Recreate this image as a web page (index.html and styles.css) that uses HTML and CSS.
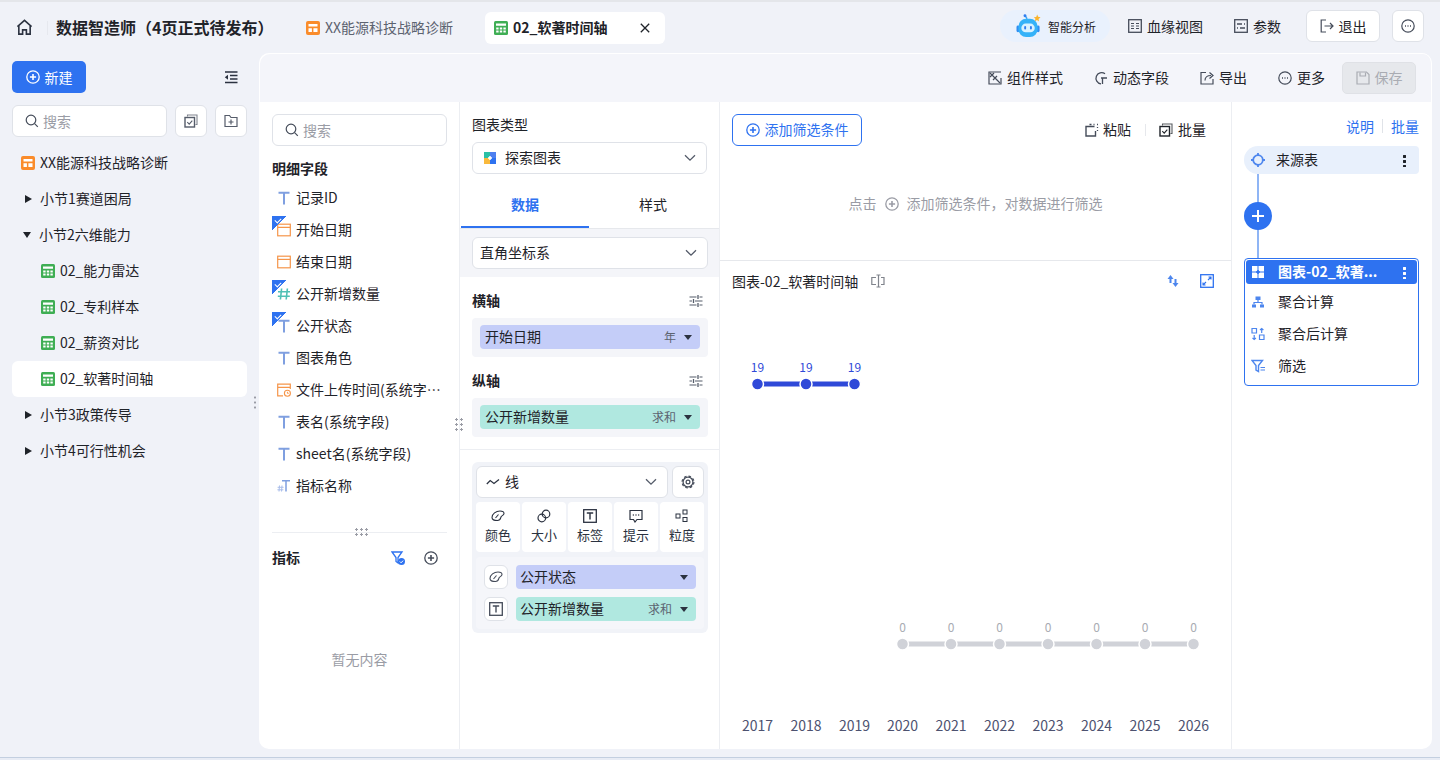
FILE: index.html
```html
<!DOCTYPE html>
<html lang="zh-CN">

<head>
    <meta charset="UTF-8">
    <meta name="viewport" content="width=device-width, initial-scale=1.0">
    <title>数据智造师</title>
    <link rel="stylesheet" href="styles.css">
</head>

<body>
    <svg class="sprite" xmlns="http://www.w3.org/2000/svg">
        <symbol id="i-dash" viewBox="0 0 14 14"><rect width="14" height="14" rx="2" fill="#fa8c2b"/><path d="M2.5 3h9v2.6h-9zM2.5 7.2h3.4v3.8H2.5zM7.4 7.2h4.1v3.8H7.4z" fill="#fff"/></symbol>
        <symbol id="i-table" viewBox="0 0 14 14"><rect width="14" height="14" rx="1.5" fill="#3fae54"/><path d="M2 2.5h10v2.3H2zM2.2 6.4h2.4v2H2.2zM5.8 6.4h2.4v2H5.8zM9.4 6.4h2.4v2H9.4zM2.2 9.6h2.4v2H2.2zM5.8 9.6h2.4v2H5.8zM9.4 9.6h2.4v2H9.4z" fill="#fff"/></symbol>
        <symbol id="i-plus" viewBox="0 0 14 14"><circle cx="7" cy="7" r="6.2" fill="none" stroke="currentColor" stroke-width="1.3"/><path d="M3.9 7h6.2M7 3.9v6.2" stroke="currentColor" stroke-width="1.6"/></symbol>
        <symbol id="i-search" viewBox="0 0 14 14"><circle cx="6" cy="6" r="4.8" fill="none" stroke="currentColor" stroke-width="1.2"/><path d="M9.6 9.6l3.2 3.2" stroke="currentColor" stroke-width="1.2"/></symbol>
        <symbol id="i-batch" viewBox="0 0 14 14"><path d="M3.5 2.5V1h9.500v9.500h-1.500" fill="none" stroke="currentColor" stroke-width="1.1" opacity=".75"/><rect x="1" y="3.5" width="9.5" height="9.5" fill="none" stroke="currentColor" stroke-width="1.4"/><path d="M3.3 8.2l1.9 1.9 3.1-3.5" fill="none" stroke="currentColor" stroke-width="1.1"/></symbol>
        <symbol id="i-t" viewBox="0 0 14 14"><path d="M1.500 1.800h11M7 1.800V13.500" fill="none" stroke="#7f9fe0" stroke-width="2"/></symbol>
        <symbol id="i-date" viewBox="0 0 14 14"><rect x=".7" y="1.2" width="12.6" height="11.6" fill="none" stroke="#f5954a" stroke-width="1.2"/><path d="M.7 4.4h12.6" stroke="#f5954a" stroke-width="1.2"/></symbol>
        <symbol id="i-hash" viewBox="0 0 14 14"><path d="M4.600 1.500L3.400 12.500M10.400 1.500L9.200 12.500M1 4.800h12M.8 9.200h12" fill="none" stroke="#4fc0b5" stroke-width="1.6"/></symbol>
        <symbol id="i-datetime" viewBox="0 0 14 14"><path d="M6 12.800H.7V1.200h12.600V6M.7 4.400h12.600" fill="none" stroke="#f5954a" stroke-width="1.2"/><circle cx="10.400" cy="10.200" r="3" fill="#fff" stroke="#f5954a" stroke-width="1.1"/><path d="M10.400 8.800v1.500h1.300" fill="none" stroke="#f5954a"/></symbol>
        <symbol id="i-metric" viewBox="0 0 14 14"><path d="M5 1.800h8M9 1.800v10.700" fill="none" stroke="#7f9fe0" stroke-width="1.5"/><path d="M2.500 6.500L2 12.500M5 6.500l-.5 6M.6 8.300h6M.4 10.800h6" fill="none" stroke="#a9bdea" stroke-width="1"/></symbol>
        <symbol id="i-chev" viewBox="0 0 12 8"><path d="M1 1.200l5 5 5-5" fill="none" stroke="currentColor" stroke-width="1.3"/></symbol>
        <symbol id="i-sliders" viewBox="0 0 14 14"><path d="M.5 3h7M10.500 3h3M.5 7h2.500M6 7h7.500M.5 11h7M10.500 11h3" fill="none" stroke="currentColor" stroke-width="1.1"/><path d="M9 1v4M4.500 5v4M9 9v4" stroke="currentColor" stroke-width="1.3"/></symbol>
        <symbol id="i-palette" viewBox="0 0 14 14"><path d="M1 8.500C1 5 5 2 9 2c2.500 0 4 1 4 2.500 0 2-2.500 2-3 3.500-.5 1.500-.5 3.500-3.500 3.500C3 11.500 1 11 1 8.500z" fill="none" stroke="currentColor" stroke-width="1.1"/><path d="M4.500 9l3-3.500" stroke="currentColor" stroke-width="1.1"/></symbol>
        <symbol id="i-label" viewBox="0 0 14 14"><rect x=".7" y=".7" width="12.6" height="12.6" fill="none" stroke="currentColor" stroke-width="1.3"/><path d="M3.800 4h6.400M7 4v6.500" fill="none" stroke="currentColor" stroke-width="1.4"/></symbol>
    </svg>

    <div class="app">
        <header class="topbar">
            <svg class="home-icon" viewBox="0 0 18 18"><path d="M1.500 8L9 1.500 16.500 8M3 6.800V16h4v-4.500h4V16h4V6.800" fill="none" stroke="#2b3240" stroke-width="1.7"/></svg>
            <span class="top-sep"></span>
            <h1 class="app-title">数据智造师（4页正式待发布）</h1>
            <div class="tab"><svg class="ic"><use href="#i-dash"/></svg>XX能源科技战略诊断</div>
            <div class="tab tab-active">
                <svg class="ic"><use href="#i-table"/></svg>
                <span class="tab-name">02_软著时间轴</span>
                <svg class="tab-close" viewBox="0 0 10 10"><path d="M.8.800l8.400 8.400M9.200.800L.8 9.200" stroke="#1f2329" stroke-width="1.3"/></svg>
            </div>
            <div class="top-actions">
                <div class="ai-pill">
                    <svg class="robot" viewBox="0 0 28 26">
                        <path d="M12 5L10 1.500" stroke="#39a4f5" stroke-width="1.5"/>
                        <circle cx="9.800" cy="1.800" r="1.5" fill="#2f7df0"/>
                        <path d="M22.500 .5l1 2.400 2.500.6-2 1.600.3 2.600-2-1.400-2.200 1.200.6-2.500-1.700-1.700 2.500-.3z" fill="#fbb42c"/>
                        <rect x="1" y="12" width="3" height="7" rx="1.5" fill="#2f8df2"/>
                        <rect x="22" y="12" width="3" height="7" rx="1.5" fill="#2f8df2"/>
                        <rect x="3" y="5" width="20" height="19" rx="8" fill="#35b2f8"/>
                        <rect x="6" y="10" width="14" height="9" rx="4.5" fill="#d9f2ff"/>
                        <rect x="9" y="12.500" width="2" height="3.5" rx="1" fill="#2f7df0"/>
                        <rect x="15" y="12.500" width="2" height="3.5" rx="1" fill="#2f7df0"/>
                    </svg>
                    <span class="ai-text">智能分析</span>
                </div>
                <div class="top-link link-lineage">
                    <svg class="ic" viewBox="0 0 14 14"><rect x=".7" y=".7" width="12.6" height="12.6" fill="none" stroke="#454c5a" stroke-width="1.3"/><path d="M3 4.500h3M3 9.500h3M8 4.500h3M8 7h3M8 9.500h3M3 7h3" stroke="#454c5a" stroke-width="1.2" fill="none"/></svg>
                    血缘视图
                </div>
                <div class="top-link link-param">
                    <svg class="ic" viewBox="0 0 14 14"><rect x=".7" y=".7" width="12.6" height="12.6" fill="none" stroke="#454c5a" stroke-width="1.3"/><path d="M3 5h5M10 5h1M3 9h1M6 9h5" stroke="#454c5a" stroke-width="1.3"/></svg>
                    参数
                </div>
                <button class="top-btn btn-exit">
                    <svg class="ic" viewBox="0 0 14 14"><path d="M6 1H1.200v12H6M4.500 7H13M10 4l3 3-3 3" fill="none" stroke="#454c5a" stroke-width="1.2"/></svg>
                    退出
                </button>
                <button class="top-btn btn-more">
                    <svg class="ic" viewBox="0 0 14 14"><circle cx="7" cy="7" r="6.2" fill="none" stroke="#454c5a" stroke-width="1.2"/><path d="M4 7h1M6.500 7h1M9 7h1" stroke="#454c5a" stroke-width="1.3"/></svg>
                </button>
            </div>
        </header>

        <div class="workspace">
            <aside class="sidebar">
                <div class="side-head">
                    <button class="btn-new"><svg class="ic"><use href="#i-plus"/></svg>新建</button>
                    <svg class="ic collapse" viewBox="0 0 14 14"><path d="M1 2h12.500M6 5.500h7.500M6 9h7.500M1 12.500h12.500" stroke="#2b3240" stroke-width="1.3"/><path d="M4 4.700L.8 7.200 4 9.700z" fill="#2b3240"/></svg>
                </div>
                <div class="side-search">
                    <div class="search-box"><svg class="ic"><use href="#i-search"/></svg>搜索</div>
                    <button class="square-btn"><svg class="ic"><use href="#i-batch"/></svg></button>
                    <button class="square-btn">
                        <svg class="ic" viewBox="0 0 14 14"><path d="M1 12.500V1.500h4.500L7 3.500h6v9z" fill="none" stroke="#555c6a" stroke-width="1.2"/><path d="M4.500 8h5M7 5.500v5" stroke="#555c6a" stroke-width="1.2"/></svg>
                    </button>
                </div>
                <ul class="tree">
                    <li class="tree-row tree-root"><svg class="ic"><use href="#i-dash"/></svg>XX能源科技战略诊断</li>
                    <li class="tree-row tree-section"><i class="caret"></i>小节1赛道困局</li>
                    <li class="tree-row tree-section"><i class="caret caret-open"></i>小节2六维能力</li>
                    <li class="tree-row tree-child"><svg class="ic"><use href="#i-table"/></svg>02_能力雷达</li>
                    <li class="tree-row tree-child"><svg class="ic"><use href="#i-table"/></svg>02_专利样本</li>
                    <li class="tree-row tree-child"><svg class="ic"><use href="#i-table"/></svg>02_薪资对比</li>
                    <li class="tree-row tree-child tree-selected"><svg class="ic"><use href="#i-table"/></svg>02_软著时间轴</li>
                    <li class="tree-row tree-section"><i class="caret"></i>小节3政策传导</li>
                    <li class="tree-row tree-section"><i class="caret"></i>小节4可行性机会</li>
                </ul>
                <span class="grip grip-side"></span>
            </aside>

            <main class="panel">
                <div class="panel-toolbar">
                    <div class="tool tool-style">
                        <svg class="ic" viewBox="0 0 14 14"><path d="M13 1H1v12h12V7" fill="none" stroke="#454c5a" stroke-width="1.2"/><path d="M2 2l10 10M6 2L2 6M9 5l-4 4" stroke="#454c5a" stroke-width="1.2"/></svg>
                        组件样式
                    </div>
                    <div class="tool tool-dynamic">
                        <svg class="ic" viewBox="0 0 14 14"><path d="M11 2.800A5.600 5.600 0 1 0 7 12.800" fill="none" stroke="#454c5a" stroke-width="1.3"/><path d="M7 7h6M8.500 7v6" stroke="#454c5a" stroke-width="1.3"/></svg>
                        动态字段
                    </div>
                    <div class="tool tool-export">
                        <svg class="ic" viewBox="0 0 14 14"><path d="M6 1.500H1v11.500h12V8" fill="none" stroke="#454c5a" stroke-width="1.2"/><path d="M5 9.500C5 6 7.500 4.500 11 4.500M9.500 1.500l3.500 3-3.500 3" fill="none" stroke="#454c5a" stroke-width="1.2"/></svg>
                        导出
                    </div>
                    <div class="tool tool-more">
                        <svg class="ic" viewBox="0 0 14 14"><circle cx="7" cy="7" r="6.2" fill="none" stroke="#454c5a" stroke-width="1.2"/><path d="M4 7h1M6.500 7h1M9 7h1" stroke="#454c5a" stroke-width="1.3"/></svg>
                        更多
                    </div>
                    <button class="btn-save">
                        <svg class="ic" viewBox="0 0 14 14"><path d="M1 1h9.500L13 3.500V13H1z" fill="none" stroke="#a9acb3" stroke-width="1.2"/><path d="M4 1.500v3.500h5.500V1.500" fill="none" stroke="#a9acb3" stroke-width="1.2"/></svg>
                        保存
                    </button>
                </div>

                <div class="columns">
                    <section class="col-fields">
                        <div class="search-box search-fields"><svg class="ic"><use href="#i-search"/></svg>搜索</div>
                        <h2 class="fields-title">明细字段</h2>
                        <ul class="field-list">
                            <li class="field"><svg class="ic"><use href="#i-t"/></svg><span>记录ID</span></li>
                            <li class="field field-used"><svg class="ic"><use href="#i-date"/></svg><span>开始日期</span></li>
                            <li class="field"><svg class="ic"><use href="#i-date"/></svg><span>结束日期</span></li>
                            <li class="field field-used"><svg class="ic"><use href="#i-hash"/></svg><span>公开新增数量</span></li>
                            <li class="field field-used"><svg class="ic"><use href="#i-t"/></svg><span>公开状态</span></li>
                            <li class="field"><svg class="ic"><use href="#i-t"/></svg><span>图表角色</span></li>
                            <li class="field"><svg class="ic"><use href="#i-datetime"/></svg><span>文件上传时间(系统字…</span></li>
                            <li class="field"><svg class="ic"><use href="#i-t"/></svg><span>表名(系统字段)</span></li>
                            <li class="field"><svg class="ic"><use href="#i-t"/></svg><span>sheet名(系统字段)</span></li>
                            <li class="field"><svg class="ic"><use href="#i-metric"/></svg><span>指标名称</span></li>
                        </ul>
                        <div class="fields-divider"><span class="grip grip-h"></span></div>
                        <div class="metric-head">
                            <h2 class="fields-title">指标</h2>
                            <svg class="ic metric-filter" viewBox="0 0 14 14"><path d="M1 1h10L7 6.500V12L5 10.500v-4z" fill="none" stroke="#2e72f0" stroke-width="1.3"/><circle cx="10.500" cy="10.500" r="3.5" fill="#2e72f0"/><path d="M8.800 10.500l1.300 1.300 2-2.200" fill="none" stroke="#fff"/></svg>
                            <svg class="ic metric-add"><use href="#i-plus"/></svg>
                        </div>
                        <p class="empty">暂无内容</p>
                        <span class="grip grip-col"></span>
                    </section>

                    <section class="col-config">
                        <div class="type-block">
                            <div class="cfg-label">图表类型</div>
                            <div class="select select-type">
                                <svg class="ic" viewBox="0 0 14 14"><path d="M1 1h6v6H1z" fill="#2bbfa5"/><path d="M7 1h6v6H7z" fill="#4d7ff0"/><path d="M1 7h6v6H1z" fill="#f9b93c"/><path d="M7 7h6v6H7z" fill="#2e72f0"/><path d="M5 7h4M7 5v4" stroke="#fff" stroke-width="1.5"/></svg>
                                <span class="select-text">探索图表</span>
                                <svg class="chev"><use href="#i-chev"/></svg>
                            </div>
                            <div class="tabs">
                                <div class="cfg-tab cfg-tab-active">数据</div>
                                <div class="cfg-tab">样式</div>
                            </div>
                        </div>
                        <div class="coord-block">
                            <div class="select">
                                <span class="select-text">直角坐标系</span>
                                <svg class="chev"><use href="#i-chev"/></svg>
                            </div>
                        </div>
                        <div class="axis-head"><b>横轴</b><svg class="ic"><use href="#i-sliders"/></svg></div>
                        <div class="axis-well">
                            <div class="pill pill-dim"><span class="pill-name">开始日期</span><span class="pill-agg">年</span><i class="pill-caret"></i></div>
                        </div>
                        <div class="axis-head"><b>纵轴</b><svg class="ic"><use href="#i-sliders"/></svg></div>
                        <div class="axis-well">
                            <div class="pill pill-measure"><span class="pill-name">公开新增数量</span><span class="pill-agg">求和</span><i class="pill-caret"></i></div>
                        </div>
                        <div class="cfg-sep"></div>
                        <div class="marks">
                            <div class="marks-top">
                                <div class="select select-mark">
                                    <svg class="ic" viewBox="0 0 14 14"><path d="M.8 9l3.400-3.500L8 8.500l5-4" fill="none" stroke="#2b3240" stroke-width="1.3"/></svg>
                                    <span class="select-text">线</span>
                                    <svg class="chev"><use href="#i-chev"/></svg>
                                </div>
                                <button class="gear-btn">
                                    <svg class="ic" viewBox="0 0 14 14"><circle cx="7" cy="7" r="4.9" fill="none" stroke="#454c5a" stroke-width="1.2"/><circle cx="7" cy="7" r="5.9" fill="none" stroke="#454c5a" stroke-width="1.2" stroke-dasharray="2.6 2"/><circle cx="7" cy="7" r="1.9" fill="none" stroke="#454c5a" stroke-width="1.2"/></svg>
                                </button>
                            </div>
                            <div class="mark-btns">
                                <div class="mark-btn"><svg class="ic"><use href="#i-palette"/></svg>颜色</div>
                                <div class="mark-btn">
                                    <svg class="ic" viewBox="0 0 14 14"><circle cx="4.800" cy="9" r="3.8" fill="none" stroke="currentColor" stroke-width="1.2"/><circle cx="9" cy="5" r="3.8" fill="none" stroke="currentColor" stroke-width="1.2"/></svg>
                                    大小
                                </div>
                                <div class="mark-btn"><svg class="ic"><use href="#i-label"/></svg>标签</div>
                                <div class="mark-btn">
                                    <svg class="ic" viewBox="0 0 14 14"><path d="M1 1.500h12v9H8L6 13l-1.500-2.500H1z" fill="none" stroke="currentColor" stroke-width="1.2"/><path d="M3.800 6h1M6.500 6h1M9.200 6h1" stroke="currentColor" stroke-width="1.3"/></svg>
                                    提示
                                </div>
                                <div class="mark-btn">
                                    <svg class="ic" viewBox="0 0 14 14"><rect x="1" y="5" width="4" height="4" fill="none" stroke="currentColor"/><rect x="8" y="1" width="4" height="4" fill="none" stroke="currentColor"/><rect x="8" y="8.500" width="4" height="4" fill="none" stroke="currentColor"/></svg>
                                    粒度
                                </div>
                            </div>
                            <div class="mark-fields">
                                <div class="mark-row">
                                    <span class="mark-icon"><svg class="ic"><use href="#i-palette"/></svg></span>
                                    <div class="pill pill-dim"><span class="pill-name">公开状态</span><i class="pill-caret"></i></div>
                                </div>
                                <div class="mark-row">
                                    <span class="mark-icon"><svg class="ic"><use href="#i-label"/></svg></span>
                                    <div class="pill pill-measure"><span class="pill-name">公开新增数量</span><span class="pill-agg">求和</span><i class="pill-caret"></i></div>
                                </div>
                            </div>
                        </div>
                    </section>

                    <section class="col-chart">
                        <div class="filter-area">
                            <div class="filter-head">
                                <button class="btn-filter"><svg class="ic"><use href="#i-plus"/></svg>添加筛选条件</button>
                                <div class="filter-tools">
                                    <span class="filter-tool tool-paste">
                                        <svg class="ic" viewBox="0 0 14 14"><path d="M9.500 3.500H1v9.500h9.500V8" fill="none" stroke="#454c5a" stroke-width="1.4"/><path d="M4.500 1.500h2M8.500 1.500h1M12 1.500h1M12.500 4v1M12.500 7v1" stroke="#454c5a" stroke-width="1.3"/></svg>
                                        粘贴
                                    </span>
                                    <span class="filter-sep"></span>
                                    <span class="filter-tool"><svg class="ic"><use href="#i-batch"/></svg>批量</span>
                                </div>
                            </div>
                            <div class="filter-hint">点击<svg class="ic"><use href="#i-plus"/></svg>添加筛选条件，对数据进行筛选</div>
                        </div>
                        <div class="chart-head">
                            <span class="chart-title">图表-02_软著时间轴</span>
                            <svg class="ic rename" viewBox="0 0 14 14"><path d="M5 3.500H.8v7H5M10 3.500h3v7h-3M7.500 1v12M5.500 1h4M5.500 13h4" fill="none" stroke="#80848c" stroke-width="1.2"/></svg>
                            <svg class="ic swap" viewBox="0 0 14 14"><path d="M4.500 1L1.500 5h2v4h2V5h2zM9.500 13l3-4h-2V5h-2v4h-2z" fill="#4d86ee"/></svg>
                            <svg class="ic expand" viewBox="0 0 14 14"><rect x=".7" y=".7" width="12.6" height="12.6" fill="none" stroke="#2e72f0" stroke-width="1.3"/><path d="M8 6l3-3M8.500 3H11v2.500M6 8l-3 3M5.500 11H3V8.500" fill="none" stroke="#2e72f0" stroke-width="1.1"/></svg>
                        </div>
                        <svg class="chart" viewBox="720 301 511 448">
                            <g class="series-on">
                                <path d="M757.500 384H854"/>
                                <circle cx="757.500" cy="384" r="6"/><circle cx="806" cy="384" r="6"/><circle cx="854.500" cy="384" r="6"/>
                            </g>
                            <g class="series-off">
                                <path d="M902.500 644H1193.500"/>
                                <circle cx="902.500" cy="644" r="6"/><circle cx="951" cy="644" r="6"/><circle cx="999.500" cy="644" r="6"/><circle cx="1048" cy="644" r="6"/><circle cx="1096.500" cy="644" r="6"/><circle cx="1145" cy="644" r="6"/><circle cx="1193.500" cy="644" r="6"/>
                            </g>
                            <g class="labels-on">
                                <text x="757.500" y="372">19</text><text x="806" y="372">19</text><text x="854.500" y="372">19</text>
                            </g>
                            <g class="labels-off">
                                <text x="902.500" y="632">0</text><text x="951" y="632">0</text><text x="999.500" y="632">0</text><text x="1048" y="632">0</text><text x="1096.500" y="632">0</text><text x="1145" y="632">0</text><text x="1193.500" y="632">0</text>
                            </g>
                            <g class="axis-labels">
                                <text x="757.500" y="731">2017</text><text x="806" y="731">2018</text><text x="854.500" y="731">2019</text><text x="902.500" y="731">2020</text><text x="951" y="731">2021</text><text x="999.500" y="731">2022</text><text x="1048" y="731">2023</text><text x="1096.500" y="731">2024</text><text x="1145" y="731">2025</text><text x="1193.500" y="731">2026</text>
                            </g>
                        </svg>
                    </section>

                    <section class="col-flow">
                        <div class="flow-links"><a>说明</a><span class="flow-sep"></span><a>批量</a></div>
                        <div class="flow-source">
                            <svg class="ic" viewBox="0 0 14 14"><circle cx="7" cy="7" r="4.8" fill="none" stroke="#4d86ee" stroke-width="1.8"/><path d="M7 0v3M7 11v3M0 7h3M11 7h3" stroke="#4d86ee" stroke-width="1.8"/></svg>
                            <span class="flow-name">来源表</span>
                            <i class="dots"></i>
                        </div>
                        <div class="flow-link"><span class="flow-add"></span></div>
                        <div class="flow-card">
                            <div class="flow-card-head">
                                <svg class="ic" viewBox="0 0 14 14"><path d="M1 1h5.500v5.500H1zM7.500 7.500H13V13H7.500zM1 7.500h5.500V13H1zM7.500 1H13v5.500H7.500z" fill="#fff"/><path d="M5 7h4M7 5v4" stroke="#2e72f0" stroke-width="1.5"/></svg>
                                <span class="flow-card-title">图表-02_软著...</span>
                                <i class="dots dots-light"></i>
                            </div>
                            <div class="flow-step">
                                <svg class="ic" viewBox="0 0 14 14"><path d="M4.500 1.500h5v3.500h-5zM1 9.500h4v3H1zM9 9.500h4v3H9z" fill="#4d86ee"/><path d="M7 5v2.500M3 9.500v-2h8v2" fill="none" stroke="#4d86ee" stroke-width="1.2"/></svg>
                                聚合计算
                            </div>
                            <div class="flow-step">
                                <svg class="ic" viewBox="0 0 14 14"><path d="M1 1.500h4.500v4.500H1zM8.500 8h4.500v4.500H8.500z" fill="none" stroke="#4d86ee" stroke-width="1.2"/><path d="M10.700 6V1.500M9 3l1.700-1.500L12.400 3M3.200 8v4.500M1.500 11l1.700 1.500L4.900 11" fill="none" stroke="#4d86ee" stroke-width="1.2"/></svg>
                                聚合后计算
                            </div>
                            <div class="flow-step">
                                <svg class="ic" viewBox="0 0 14 14"><path d="M1 1.500h10.500L7.500 6.500v6L5 11V6.500z" fill="none" stroke="#4d86ee" stroke-width="1.4"/><path d="M9.500 8.500H14M9.500 11H14" stroke="#4d86ee" stroke-width="1.2"/></svg>
                                筛选
                            </div>
                        </div>
                    </section>
                </div>
            </main>
        </div>
        <div class="statusline"></div>
    </div>
</body>

</html>
```

FILE: styles.css
```css
* {
    box-sizing: border-box;
}

body {
    margin: 0px;
    font-family: "Noto Sans CJK SC", "Noto Sans", sans-serif;
    font-size: 14px;
    color: #1f2329;
    background-color: #f0f2f8;
}

h1, h2, p, ul {
    margin: 0px;
    padding: 0px;
}

ul {
    list-style: none;
}

button {
    font: inherit;
    color: inherit;
    padding: 0px;
}

.sprite {
    display: none;
}

.ic {
    flex: none;
    width: 14px;
    height: 14px;
}

/* the font sits a pixel low in its line, so rows lift the text and keep the icons */
.tab,
.tree-row,
.field,
.tool,
.btn-save,
.select,
.pill,
.btn-filter,
.filter-tool,
.filter-hint,
.flow-source,
.flow-card-head,
.flow-step,
.axis-head {
    padding-bottom: 2px;
}

.tab > svg,
.tree-row > svg,
.tree-row > i,
.field > svg,
.tool > svg,
.btn-save > svg,
.select > svg,
.pill > i,
.btn-filter > svg,
.filter-tool > svg,
.filter-hint > svg,
.flow-source > svg,
.flow-source > i,
.flow-card-head > svg,
.flow-card-head > i,
.flow-step > svg,
.axis-head > svg {
    margin-top: 2px;
}

.app {
    display: flex;
    flex-direction: column;
    width: 100vw;
    height: 100vh;
    overflow: hidden;
    border-top: 2px solid #e4e6ea;
}

/* top bar */

.topbar {
    display: flex;
    align-items: center;
    flex: none;
    height: 51px;
    padding: 0px 16px;
}

.home-icon {
    flex: none;
    width: 17px;
    height: 17px;
}

.top-sep {
    flex: none;
    width: 1px;
    height: 14px;
    margin: 0px 8px 0px 14px;
    background-color: #e6e8ee;
}

.app-title {
    flex: none;
    width: 218px;
    margin-bottom: 2px;
    font-size: 16px;
    font-weight: 700;
    white-space: nowrap;
}

.tab {
    display: flex;
    align-items: center;
    flex: none;
    gap: 5px;
    width: 149px;
    height: 32px;
    margin-left: 32px;
    white-space: nowrap;
    color: #5c6370;
}

.tab-active {
    width: 180px;
    margin-left: 30px;
    padding: 0px 14px 2px 9px;
    background-color: #ffffff;
    border-radius: 6px;
    color: #1f2329;
    font-weight: 700;
}

.tab-name {
    flex: 1;
}

.tab-close {
    width: 10px;
    height: 10px;
    margin-right: 1px;
}

.top-actions {
    display: flex;
    align-items: center;
    margin-left: auto;
    margin-bottom: 3px;
}

.ai-pill {
    display: flex;
    align-items: center;
    gap: 5px;
    width: 110px;
    height: 32px;
    padding-left: 15px;
    background-color: #e9f1fd;
    border-radius: 16px;
}

.robot {
    width: 28px;
    height: 25px;
}

.ai-text {
    font-size: 12px;
}

.top-link {
    display: flex;
    align-items: center;
    gap: 5px;
}

.link-lineage {
    margin-left: 18px;
}

.link-param {
    margin-left: 31px;
}

.top-btn {
    display: flex;
    align-items: center;
    justify-content: center;
    gap: 5px;
    height: 32px;
    background-color: #ffffff;
    border: 1px solid #dfe2e8;
    border-radius: 6px;
}

.btn-exit {
    width: 74px;
    margin-left: 25px;
}

.btn-more {
    width: 32px;
    margin-left: 12px;
}

/* layout under the top bar */

.workspace {
    display: flex;
    flex: none;
    height: 696px;
}

.sidebar {
    position: relative;
    flex: none;
    width: 259px;
    padding: 8px 12px 0px 12px;
}

.side-head {
    display: flex;
    align-items: center;
    justify-content: space-between;
    padding-right: 9px;
}

.btn-new {
    display: flex;
    align-items: center;
    justify-content: center;
    gap: 5px;
    width: 74px;
    height: 32px;
    background-color: #2e72f0;
    border: none;
    border-radius: 5px;
    color: #ffffff;
}

.side-search {
    display: flex;
    gap: 8px;
    margin-top: 12px;
}

.search-box {
    display: flex;
    align-items: center;
    gap: 4px;
    flex: 1;
    height: 32px;
    padding-left: 12px;
    background-color: #ffffff;
    border: 1px solid #dfe2e8;
    border-radius: 6px;
    color: #9a9ca5;
}

.search-box .ic {
    color: #454c5a;
}

.square-btn {
    display: flex;
    align-items: center;
    justify-content: center;
    flex: none;
    width: 32px;
    height: 32px;
    background-color: #ffffff;
    border: 1px solid #dfe2e8;
    border-radius: 6px;
    color: #555c6a;
}

.tree {
    margin-top: 8px;
}

.tree-row {
    display: flex;
    align-items: center;
    gap: 5px;
    height: 36px;
    border-radius: 6px;
    white-space: nowrap;
}

.tree-root {
    padding-left: 9px;
}

.tree-section {
    gap: 8px;
    padding-left: 13px;
}

.tree-child {
    padding-left: 29px;
}

.tree-selected {
    background-color: #ffffff;
}

.caret {
    width: 0px;
    height: 0px;
    border-style: solid;
    border-width: 4.5px 0px 4.5px 7px;
    border-color: transparent transparent transparent #1f2329;
}

.caret-open {
    margin-left: -2px;
    border-width: 6px 4.5px 0px 4.5px;
    border-color: #1f2329 transparent transparent transparent;
}

.grip {
    position: absolute;
    display: block;
    width: 2px;
    height: 14px;
    background-image: radial-gradient(circle, #9a9ca5 1px, transparent 1.2px);
    background-size: 2px 5px;
}

.grip-side {
    top: 342px;
    right: 3px;
}

.panel {
    display: flex;
    flex-direction: column;
    flex: none;
    width: 1173px;
    background-color: #ffffff;
    border-radius: 10px;
    overflow: hidden;
}

.panel-toolbar {
    display: flex;
    align-items: center;
    flex: none;
    height: 49px;
    padding-right: 16px;
    background-color: #f4f5fa;
    border-radius: 10px 10px 0px 0px;
    box-shadow: inset 1px 1px 0px #ffffff, inset -1px 0px 0px #ffffff;
}

.tool {
    display: flex;
    align-items: center;
    gap: 5px;
}

.tool-style {
    margin-left: auto;
}

.tool-dynamic,
.tool-export,
.tool-more {
    margin-left: 31px;
}

.btn-save {
    display: flex;
    align-items: center;
    justify-content: center;
    gap: 5px;
    width: 74px;
    height: 32px;
    margin-left: 17px;
    background-color: #e6e8ec;
    border: 1px solid #dfe1e6;
    border-radius: 5px;
    color: #a9acb3;
}

.columns {
    display: flex;
    flex: 1;
    min-height: 0px;
}

/* field list */

.col-fields {
    position: relative;
    flex: none;
    width: 201px;
    padding: 12px 12px 0px 13px;
    border-right: 1px solid #eceef2;
}

.search-fields {
    flex: none;
}

.fields-title {
    height: 24px;
    margin-top: 11px;
    font-size: 14px;
    font-weight: 700;
    line-height: 22px;
}

.field {
    position: relative;
    display: flex;
    align-items: center;
    gap: 5px;
    height: 32px;
    padding-left: 5px;
}

.field span {
    white-space: nowrap;
}

.field-list {
    margin-top: 1px;
}

.field-used::before {
    content: "";
    position: absolute;
    top: 2px;
    left: 0px;
    width: 14px;
    height: 14px;
    background: linear-gradient(135deg, #2e72f0 50%, transparent 50%);
}

.field-used::after {
    content: "";
    position: absolute;
    top: 4px;
    left: 3px;
    width: 5px;
    height: 3px;
    border-left: 1px solid #ffffff;
    border-bottom: 1px solid #ffffff;
    transform: rotate(-45deg);
}

.fields-divider {
    position: relative;
    height: 1px;
    margin-top: 30px;
    background-color: #eceef2;
}

.grip-h {
    top: -5px;
    left: 82px;
    width: 14px;
    height: 11px;
    background-size: 5px 5px;
}

.metric-head {
    display: flex;
    align-items: center;
    height: 24px;
    margin-top: 13px;
}

.metric-head .fields-title {
    flex: 1;
    margin-top: 0px;
}

.metric-filter {
    margin-right: 19px;
}

.metric-add {
    margin-right: 9px;
    color: #454c5a;
}

.empty {
    margin-top: 79px;
    text-align: center;
    color: #9a9ca5;
}

.grip-col {
    top: 315px;
    right: -4px;
    width: 9px;
    height: 14px;
    background-size: 5px 5px;
}

/* chart config */

.col-config {
    flex: none;
    width: 260px;
    border-right: 1px solid #eceef2;
}

.type-block {
    padding-top: 13px;
}

.cfg-label {
    height: 20px;
    margin: 0px 12px 7px 12px;
    line-height: 18px;
}

.select {
    display: flex;
    align-items: center;
    gap: 5px;
    height: 32px;
    padding-left: 7px;
    padding-right: 10px;
    background-color: #ffffff;
    border: 1px solid #dfe2e8;
    border-radius: 6px;
}

.select-type {
    gap: 8px;
    width: 235px;
    margin-left: 12px;
    padding-left: 10px;
}

.select-text {
    flex: 1;
}

.chev {
    flex: none;
    width: 12px;
    height: 8px;
    color: #555c6a;
}

.tabs {
    display: flex;
    height: 47px;
    margin-top: 8px;
    border-bottom: 1px solid #e6e8ec;
}

.cfg-tab {
    width: 128px;
    height: 46px;
    line-height: 44px;
    text-align: center;
}

.cfg-tab-active {
    margin-left: 1px;
    font-weight: 700;
    color: #2e72f0;
    border-bottom: 2px solid #2e72f0;
}

.coord-block {
    height: 48px;
    padding: 8px 11px 0px 12px;
    background-color: #f4f5f9;
}

.axis-head {
    display: flex;
    align-items: center;
    justify-content: space-between;
    height: 20px;
    margin: 14px 16px 7px 12px;
    color: #1f2329;
}

.axis-head .ic {
    color: #555c6a;
}

.axis-well {
    width: 236px;
    height: 39px;
    margin-left: 12px;
    padding: 7px 8px 0px 8px;
    background-color: #f4f5f9;
    border-radius: 4px;
}

.pill {
    display: flex;
    align-items: center;
    flex: 1;
    height: 24px;
    padding-left: 5px;
    padding-right: 8px;
    border-radius: 4px;
}

.pill-dim {
    background-color: #c4cdf8;
}

.pill-measure {
    background-color: #b0e8e0;
}

.pill-name {
    flex: 1;
    white-space: nowrap;
}

.pill-agg {
    margin-right: 8px;
    font-size: 12px;
    color: #5c6370;
}

.pill-caret {
    width: 0px;
    height: 0px;
    border-style: solid;
    border-width: 5px 4px 0px 4px;
    border-color: #2b3240 transparent transparent transparent;
}

.cfg-sep {
    height: 1px;
    margin-top: 12px;
    background-color: #eceef2;
}

.marks {
    width: 236px;
    height: 171px;
    margin: 12px 0px 0px 12px;
    padding: 4px;
    background-color: #f1f3f8;
    border-radius: 6px;
}

.marks-top {
    display: flex;
    gap: 4px;
}

.select-mark {
    flex: 1;
    padding-left: 9px;
}

.gear-btn {
    display: flex;
    align-items: center;
    justify-content: center;
    flex: none;
    width: 32px;
    height: 32px;
    background-color: #ffffff;
    border: 1px solid #dfe2e8;
    border-radius: 6px;
}

.mark-btns {
    display: flex;
    gap: 2px;
    margin-top: 4px;
}

.mark-btn {
    display: flex;
    flex-direction: column;
    align-items: center;
    gap: 2px;
    width: 44px;
    height: 50px;
    padding-top: 7px;
    font-size: 13px;
    line-height: 19px;
    background-color: #ffffff;
    border-radius: 4px;
    color: #2b3240;
}

.mark-fields {
    height: 72px;
    margin-top: 5px;
    padding: 8px 8px 0px 8px;
    background-color: #f5f6fa;
    border-radius: 4px;
}

.mark-row {
    display: flex;
    align-items: center;
    gap: 8px;
    margin-bottom: 8px;
}

.mark-row .pill {
    padding-left: 4px;
}

.mark-icon {
    display: flex;
    align-items: center;
    justify-content: center;
    flex: none;
    width: 24px;
    height: 24px;
    background-color: #ffffff;
    border: 1px solid #dfe2e8;
    border-radius: 6px;
    color: #454c5a;
}

/* chart */

.col-chart {
    flex: none;
    width: 512px;
    border-right: 1px solid #eceef2;
}

.filter-area {
    height: 159px;
    padding: 12px 12px 0px 12px;
    border-bottom: 1px solid #e6e8ec;
}

.filter-head {
    display: flex;
    align-items: center;
    justify-content: space-between;
    padding-right: 13px;
}

.btn-filter {
    display: flex;
    align-items: center;
    justify-content: center;
    gap: 5px;
    width: 130px;
    height: 32px;
    background-color: #ffffff;
    border: 1px solid #2e72f0;
    border-radius: 6px;
    color: #2e72f0;
}

.filter-tools {
    display: flex;
    align-items: center;
}

.filter-tool {
    display: flex;
    align-items: center;
    gap: 5px;
}

.tool-paste {
    gap: 4px;
}

.filter-sep {
    width: 1px;
    height: 12px;
    margin: 0px 13px 0px 14px;
    background-color: #e6e8ec;
}

.filter-hint {
    display: flex;
    align-items: center;
    justify-content: center;
    gap: 8px;
    margin-top: 47px;
    color: #9a9ca5;
}

.chart-head {
    display: flex;
    align-items: center;
    height: 40px;
    padding: 0px 17px 0px 12px;
}

.chart-title {
    margin-right: 13px;
}

.swap {
    margin-left: auto;
}

.expand {
    margin-left: 20px;
}

.chart {
    display: block;
    width: 511px;
    height: 448px;
}

.chart text {
    text-anchor: middle;
}

.series-on path,
.series-off path {
    fill: none;
    stroke-width: 5px;
}

.series-on path {
    stroke: #2f49d8;
}

.series-off path {
    stroke: #d0d2d8;
}

.series-on circle,
.series-off circle {
    stroke: #ffffff;
    stroke-width: 1.5px;
}

.series-on circle {
    fill: #2f49d8;
}

.series-off circle {
    fill: #d0d2d8;
}

.labels-on text {
    font-size: 12px;
    fill: #2f49d8;
}

.labels-off text {
    font-size: 12px;
    fill: #a9acb3;
}

.axis-labels text {
    font-size: 14px;
    fill: #4d5270;
}

/* flow */

.col-flow {
    flex: none;
    width: 200px;
    padding: 14px 13px 0px 12px;
}

.flow-links {
    display: flex;
    align-items: center;
    justify-content: flex-end;
    height: 20px;
    color: #2e72f0;
}

.flow-sep {
    width: 1px;
    height: 14px;
    margin: 0px 8px;
    background-color: #e0e3e8;
}

.flow-source {
    display: flex;
    align-items: center;
    height: 28px;
    margin-top: 10px;
    padding-left: 7px;
    padding-right: 13px;
    background-color: #e8f0fc;
    border-radius: 14px 4px 4px 14px;
}

.flow-name {
    flex: 1;
    margin-left: 11px;
}

.dots {
    flex: none;
    width: 3px;
    height: 13px;
    background-image: radial-gradient(circle, #1f2329 1.4px, transparent 1.6px);
    background-size: 3px 5px;
}

.dots-light {
    background-image: radial-gradient(circle, #ffffff 1.4px, transparent 1.6px);
}

.flow-link {
    display: flex;
    align-items: center;
    width: 28px;
    height: 84px;
    background: linear-gradient(#8fb5f5, #8fb5f5) center / 2px 100% no-repeat;
}

.flow-add {
    position: relative;
    display: block;
    width: 28px;
    height: 28px;
    background-color: #2e72f0;
    border-radius: 50%;
}

.flow-add::before,
.flow-add::after {
    content: "";
    position: absolute;
    background-color: #ffffff;
}

.flow-add::before {
    top: 13px;
    left: 8px;
    width: 12px;
    height: 2px;
}

.flow-add::after {
    top: 8px;
    left: 13px;
    width: 2px;
    height: 12px;
}

.flow-card {
    height: 128px;
    padding: 1px;
    border: 1px solid #2e72f0;
    border-radius: 4px;
}

.flow-card-head {
    display: flex;
    align-items: center;
    height: 24px;
    padding-left: 5px;
    padding-right: 11px;
    background-color: #2e72f0;
    border-radius: 3px;
    color: #ffffff;
    font-weight: 700;
}

.flow-card-title {
    flex: 1;
    margin-left: 13px;
    white-space: nowrap;
}

.flow-step {
    display: flex;
    align-items: center;
    gap: 13px;
    height: 32px;
    padding-left: 5px;
}

.flow-card-head + .flow-step {
    margin-top: 2px;
}

.statusline {
    flex: none;
    height: 3px;
    margin-top: 8px;
    border-top: 1px solid #c3cfe0;
    background-color: #e8ecf5;
}
```
